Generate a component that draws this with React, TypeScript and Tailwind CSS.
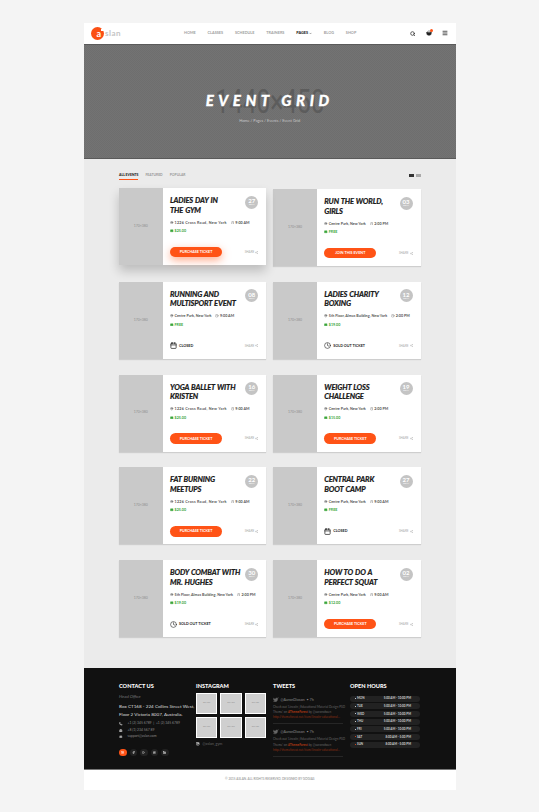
import { Calendar, ChevronDown, Clock, MapPin, Menu, Phone, Printer, Mail, Search, Share2, ShoppingBasket, Ticket, Twitter, Instagram, Facebook, Youtube, Linkedin, Play } from 'lucide-react';

type Footer = { kind: 'button'; label: string } | { kind: 'closed' } | { kind: 'sold' };

interface EventItem {
  title: [string, string];
  day: string;
  place: string;
  time: string;
  price: string;
  footer: Footer;
}

const purchase: Footer = { kind: 'button', label: 'PURCHASE TICKET' };

const events: EventItem[] = [
  { title: ['LADIES DAY IN', 'THE GYM'], day: '27', place: '1226 Cross Road, New York', time: '9:00 AM', price: '$25.00', footer: purchase },
  { title: ['RUN THE WORLD,', 'GIRLS'], day: '03', place: 'Centre Park, New York', time: '2:00 PM', price: 'FREE', footer: { kind: 'button', label: 'JOIN THIS EVENT' } },
  { title: ['RUNNING AND', 'MULTISPORT EVENT'], day: '08', place: 'Centre Park, New York', time: '9:00 AM', price: 'FREE', footer: { kind: 'closed' } },
  { title: ['LADIES CHARITY', 'BOXING'], day: '12', place: '5th Floor, Almas Building, New York', time: '2:00 PM', price: '$19.00', footer: { kind: 'sold' } },
  { title: ['YOGA BALLET WITH', 'KRISTEN'], day: '16', place: '1226 Cross Road, New York', time: '9:00 AM', price: '$25.00', footer: purchase },
  { title: ['WEIGHT LOSS', 'CHALLENGE'], day: '19', place: 'Centre Park, New York', time: '2:00 PM', price: '$15.00', footer: purchase },
  { title: ['FAT BURNING', 'MEETUPS'], day: '22', place: '1226 Cross Road, New York', time: '9:00 AM', price: '$25.00', footer: purchase },
  { title: ['CENTRAL PARK', 'BOOT CAMP'], day: '27', place: 'Centre Park, New York', time: '9:00 AM', price: 'FREE', footer: { kind: 'closed' } },
  { title: ['BODY COMBAT WITH', 'MR. HUGHES'], day: '30', place: '5th Floor, Almas Building, New York', time: '2:00 PM', price: '$19.00', footer: { kind: 'sold' } },
  { title: ['HOW TO DO A', 'PERFECT SQUAT'], day: '02', place: 'Centre Park, New York', time: '9:00 AM', price: '$12.00', footer: purchase },
];

const navItems = ['HOME', 'CLASSES', 'SCHEDULE', 'TRAINERS', 'PAGES', 'BLOG', 'SHOP'];

const hours = [
  ['MON', '5:00 AM - 10:00 PM'],
  ['TUE', '5:00 AM - 10:00 PM'],
  ['WED', '5:00 AM - 10:00 PM'],
  ['THU', '5:00 AM - 10:00 PM'],
  ['FRI', '5:00 AM - 10:00 PM'],
  ['SAT', '8:00 AM - 5:00 PM'],
  ['SUN', '8:00 AM - 5:00 PM'],
];

function EventCard({ event, featured }: { event: EventItem; featured: boolean }) {
  const { footer } = event;
  return (
    <div className={`flex h-[77px] bg-white ${featured ? '-translate-y-[1px] shadow-[0_6px_10px_rgba(0,0,0,0.2)]' : 'shadow-[0_1px_1px_rgba(0,0,0,0.12)]'}`}>
      <div className="flex w-[43.5px] shrink-0 items-center justify-center bg-[#c9c9c9] text-[3.5px] text-[#8f8f8f]">170×380</div>
      <div className="relative flex min-w-0 flex-1 flex-col pt-[8px] pr-[8px] pb-[7.5px] pl-[7.5px]">
        <div className="absolute top-[7.5px] right-[8px] flex h-[13px] w-[13px] flex-col items-center justify-center rounded-full bg-[#c4c4c4] leading-none text-white">
          <span className="text-[6px] font-bold">{event.day}</span>
          <span className="text-[2.5px] font-bold">MAY</span>
        </div>
        <h3 className="text-[7.5px] leading-[9.5px] font-black tracking-[-0.15px] [word-spacing:0.5px] whitespace-nowrap text-[#1b1b1b] italic [-webkit-text-stroke:0.15px_#1b1b1b]">
          {event.title[0]}
          <br />
          {event.title[1]}
        </h3>
        <div className="mt-[4.5px] flex items-center gap-[4px] text-[3.7px] font-bold whitespace-nowrap text-[#555]">
          <span className={`flex items-center gap-[1px] ${event.place.startsWith('1226') ? 'tracking-[0.28px]' : ''}`}>
            <MapPin className="h-[3.5px] w-[3.5px]" strokeWidth={3} />
            {event.place}
          </span>
          <span className="flex items-center gap-[1px]">
            <Clock className="h-[3.5px] w-[3.5px]" strokeWidth={2} />
            {event.time}
          </span>
        </div>
        <div className="mt-[3px] flex items-center gap-[1px] text-[3.7px] font-bold text-[#3aa63a]">
          <Ticket className="h-[3.5px] w-[3.5px] fill-[#3aa63a]" strokeWidth={2} />
          {event.price}
        </div>
        <div className="mt-auto flex h-[11px] items-center justify-between">
          {footer.kind === 'button' && (
            <span className={`flex h-[10.5px] w-[52px] items-center justify-center rounded-full bg-[#ff5316] text-[3.7px] font-bold text-white ${featured ? 'shadow-[0_3px_8px_rgba(255,83,22,0.5)]' : ''}`}>
              {footer.label}
            </span>
          )}
          {footer.kind === 'closed' && (
            <span className="flex items-center gap-[2px] text-[3.7px] font-bold text-[#222]">
              <Calendar className="h-[7px] w-[7px]" strokeWidth={2.5} />
              CLOSED
            </span>
          )}
          {footer.kind === 'sold' && (
            <span className="flex items-center gap-[2px] text-[3.7px] font-bold text-[#222]">
              <Clock className="h-[7px] w-[7px]" strokeWidth={2} />
              SOLD OUT TICKET
            </span>
          )}
          <span className="flex items-center gap-[1px] text-[3px] text-[#aaa]">
            SHARE
            <Share2 className="h-[3px] w-[3px]" />
          </span>
        </div>
      </div>
    </div>
  );
}

function Tweet() {
  return (
    <div className="border-b border-[#262626] pb-[2.5px]">
      <div className="flex items-center gap-[2px] text-[3.7px] text-[#8a8a8a]">
        <Twitter className="h-[5.5px] w-[5.5px] fill-[#666] text-[#666]" />
        <span>@AaronDixson</span>
        <span>• 7h</span>
      </div>
      <p className="mt-[2.5px] text-[3.1px] leading-[5.4px] whitespace-nowrap text-[#666]">
        Check out 'Lincoln | Educational Material Design PSD
        <br />
        Theme' on <span className="font-bold text-[#b03a14]">#ThemeForest</span> by @aaronokoen
        <br />
        <span className="text-[#8b2f12]">http://themeforest.net/item/lincoln-educational...</span>
      </p>
    </div>
  );
}

export default function App() {
  return (
    <div className="min-h-[812px] bg-[#f4f4f4] pt-[23px] font-['Lato',sans-serif]">
      <div className="ml-[84px] w-[371.5px]">
        <header className="flex h-[20.5px] items-center bg-white pr-[8px] pl-[7px]">
          <div className="flex w-[93px] items-center">
            <div className="relative flex h-[12.5px] w-[12.5px] items-center justify-center rounded-full bg-[#fb4f14] pt-[1px] pl-[3px]">
              <span className="absolute top-[2px] right-0 h-[2px] w-[3px] bg-white" />
              <span className="text-[9px] leading-none font-bold text-white">a</span>
            </div>
            <span className="ml-[1.5px] text-[8px] leading-none font-bold tracking-[0.5px] text-[#c4c4c4]">slan</span>
          </div>
          <nav className="flex items-center gap-[11.8px] text-[3.8px] font-bold text-[#a0a0a0]">
            {navItems.map((item) => (
              <span key={item} className={item === 'PAGES' ? 'flex items-center gap-[1px] font-black text-[#222]' : ''}>
                {item}
                {item === 'PAGES' && <ChevronDown className="h-[3px] w-[3px]" strokeWidth={3} />}
              </span>
            ))}
          </nav>
          <div className="ml-auto flex items-center gap-[10px] text-[#222]">
            <Search className="h-[5.5px] w-[5.5px]" strokeWidth={3} />
            <div className="relative">
              <ShoppingBasket className="h-[6px] w-[6px] fill-[#222]" strokeWidth={2.5} />
              <span className="absolute -top-[1.5px] -right-[1.5px] h-[3px] w-[3px] rounded-full bg-[#ff5316]" />
            </div>
            <Menu className="h-[6px] w-[6px]" strokeWidth={3} />
          </div>
        </header>

        <section className="flex h-[115.5px] flex-col items-center border-y border-[#5a5a5a] bg-[#707070] bg-[repeating-linear-gradient(45deg,#6e6e6e_0,#6e6e6e_0.707px,#737373_0.707px,#737373_1.414px)] pt-[43px]">
          <div className="relative flex h-[26px] items-center justify-center">
            <span className="absolute scale-x-[0.72] font-['Roboto',sans-serif] text-[34px] leading-none whitespace-nowrap text-[#5c5c5c]">1440×450</span>
            <h1 className="relative text-[15px] font-black tracking-[4.6px] whitespace-nowrap text-white italic [-webkit-text-stroke:0.3px_#fff]">EVENT GRID</h1>
          </div>
          <div className="mt-[4.5px] text-[3.9px] text-[#c8c8c8]">Home / Pages / Events / Event Grid</div>
        </section>

        <main className="bg-[#ebebeb] px-[35px] pt-[14px] pb-[31px]">
          <div className="flex h-[16px] items-start justify-between">
            <div className="flex gap-[7px] text-[3.4px] font-bold text-[#9a9a9a]">
              <span className="border-b border-[#ff5316] pb-[0.5px] font-black text-[#222]">ALL EVENTS</span>
              <span>FEATURED</span>
              <span>POPULAR</span>
            </div>
            <div className="flex gap-[2.5px] pt-[0.5px]">
              <span className="h-[3.5px] w-[4.5px] bg-[#333]" />
              <span className="h-[3.5px] w-[4.5px] bg-[#aaa]" />
            </div>
          </div>
          <div className="grid grid-cols-2 gap-x-[7px] gap-y-[15.75px]">
            {events.map((event, i) => (
              <EventCard key={i} event={event} featured={i === 0} />
            ))}
          </div>
        </main>

        <footer className="h-[102px] border-b-[1px] border-[#777] bg-[#111] px-[35px] pt-[13.5px]">
          <div className="grid grid-cols-[70px_70px_70px_70px] gap-x-[7px]">
            <div>
              <h4 className="text-[5.6px] leading-[7px] font-black text-white">CONTACT US</h4>
              <p className="mt-[5px] text-[4.4px] text-[#777] italic">Head Office</p>
              <p className="mt-[1.5px] text-[4.6px] leading-[8px] whitespace-nowrap text-[#ddd]">
                Box CT168 - 224 Collins Street West,
                <br />
                Floor 2 Victoria 8007, Australia.
              </p>
              <div className="mt-[3.5px] flex flex-col gap-[1px] text-[3.4px] leading-[5.5px] text-[#888]">
                <span className="flex items-center gap-[5px]"><Phone className="h-[3.5px] w-[3.5px] fill-[#aaa] text-[#aaa]" />+1 (2) 345 6789 &nbsp;|&nbsp; +1 (2) 345 6789</span>
                <span className="flex items-center gap-[5px]"><Printer className="h-[3.5px] w-[3.5px] fill-[#aaa] text-[#aaa]" />+8 (1) 234 567 89</span>
                <span className="flex items-center gap-[5px]"><Mail className="h-[3.5px] w-[3.5px] fill-[#aaa] text-[#111]" />support@aslan.com</span>
              </div>
              <div className="mt-[9px] flex gap-[3px]">
                {[Instagram, Facebook, Play, Youtube, Linkedin].map((Icon, i) => (
                  <span key={i} className={`flex h-[7.5px] w-[7.5px] items-center justify-center rounded-full ${i === 0 ? 'bg-[#ff5316]' : 'bg-[#222]'}`}>
                    <Icon className="h-[3px] w-[3px] text-white" strokeWidth={3} />
                  </span>
                ))}
              </div>
            </div>
            <div>
              <h4 className="text-[5.6px] leading-[7px] font-black text-white">INSTAGRAM</h4>
              <div className="mt-[4px] grid grid-cols-3 gap-x-[3.3px] gap-y-[3px]">
                {[0, 1, 2, 3, 4, 5].map((n) => (
                  <div key={n} className="flex h-[21px] items-center justify-center border border-white bg-[#cfcfcf] text-[2.5px] text-[#999]">80×80</div>
                ))}
              </div>
              <div className="mt-[3.5px] flex items-center gap-[3px] text-[3.7px] text-[#666]">
                <Instagram className="h-[3.5px] w-[3.5px] text-white" strokeWidth={3} />
                @aslan_gym
              </div>
            </div>
            <div>
              <h4 className="text-[5.6px] leading-[7px] font-black text-white">TWEETS</h4>
              <div className="mt-[8px] flex flex-col gap-[5px]">
                <Tweet />
                <Tweet />
              </div>
            </div>
            <div>
              <h4 className="text-[5.6px] leading-[7px] font-black text-white">OPEN HOURS</h4>
              <div className="mt-[7px] flex flex-col gap-[1.7px]">
                {hours.map(([day, time], i) => (
                  <div key={day} className="flex h-[6px] items-center justify-between rounded-full bg-[#222] pr-[9px] pl-[5px] text-[3px] font-bold text-[#ccc]">
                    <span className="flex items-center gap-[1px]">
                      <span className={`h-[1px] w-[1px] rounded-full ${i > 4 ? 'bg-[#ff5316]' : 'bg-white'}`} />
                      {day}
                    </span>
                    <span>{time}</span>
                  </div>
                ))}
              </div>
            </div>
          </div>
        </footer>

        <div className="flex h-[19.5px] items-center justify-center bg-white text-[3.1px] text-[#888]">© 2015 ASLAN. ALL RIGHTS RESERVED. DESIGNED BY GOGIAS</div>
      </div>
    </div>
  );
}
